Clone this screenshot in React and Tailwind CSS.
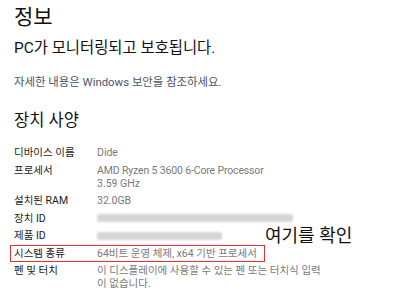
export default function App() {
  const font = { fontFamily: 'Roboto, "Noto Sans CJK KR", sans-serif' };
  const Row = ({ label, children, className = "" }) => (
    <div className={"relative flex " + className}>
      <div className="w-[83px] shrink-0 text-[#1b1b1b]">{label}</div>
      <div className="text-[#7a7a7a]">{children}</div>
    </div>
  );
  const Blur = ({ w }) => (
    <div className="flex h-[13px] items-center">
      <div className={"h-[8px] rounded-[2px] bg-[#d6d6d6] blur-[1px] " + w} />
    </div>
  );
  return (
    <div className="relative h-[298px] w-[420px] overflow-hidden bg-white pl-[14px]" style={font}>
      <div className="pt-[4px] text-[21px] leading-[26px] text-[#111]">정보</div>
      <div className="mt-[8px] text-[15.4px] leading-[20px] text-[#111]">PC가 모니터링되고 보호됩니다.</div>
      <div className="mt-[16.5px] text-[11.4px] leading-[14px] text-[#4a5568]">자세한 내용은 Windows 보안을 참조하세요.</div>
      <div className="mt-[21px] text-[16.5px] leading-[22px] text-[#111]">장치 사양</div>
      <div className="mt-[14.5px] flex flex-col gap-[4.5px] text-[10.5px] leading-[13px]">
        <Row label="디바이스 이름">Dide</Row>
        <Row label="프로세서">
          <span className="tracking-[-0.15px]">AMD Ryzen 5 3600 6-Core Processor</span>
          <br />
          3.59 GHz
        </Row>
        <Row label="설치된 RAM">32.0GB</Row>
        <Row label="장치 ID">
          <Blur w="w-[196px]" />
        </Row>
        <Row label="제품 ID">
          <Blur w="w-[125px]" />
        </Row>
        <Row label="시스템 종류">
          64비트 운영 체제, x64 기반 프로세서
          <div className="absolute -left-[4px] -top-[2px] h-[17px] w-[255px] border-[1.5px] border-[#e8302f]" />
        </Row>
        <Row label="펜 및 터치">
          이 디스플레이에 사용할 수 있는 펜 또는 터치식 입력
          <br />
          이 없습니다.
        </Row>
      </div>
      <div className="absolute left-[265px] top-[224.5px] text-[18px] leading-[22px] text-[#111]">여기를 확인</div>
    </div>
  );
}
